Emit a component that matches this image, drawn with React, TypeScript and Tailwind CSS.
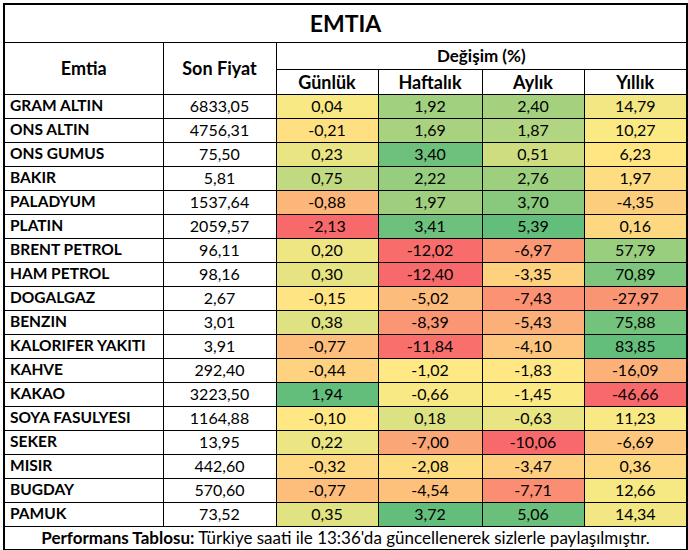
import React from "react";

type Row = [string, string, number, number, number, number];

const data: Row[] = [
  ["GRAM ALTIN", "6833,05", 0.04, 1.92, 2.4, 14.79],
  ["ONS ALTIN", "4756,31", -0.21, 1.69, 1.87, 10.27],
  ["ONS GUMUS", "75,50", 0.23, 3.4, 0.51, 6.23],
  ["BAKIR", "5,81", 0.75, 2.22, 2.76, 1.97],
  ["PALADYUM", "1537,64", -0.88, 1.97, 3.7, -4.35],
  ["PLATIN", "2059,57", -2.13, 3.41, 5.39, 0.16],
  ["BRENT PETROL", "96,11", 0.2, -12.02, -6.97, 57.79],
  ["HAM PETROL", "98,16", 0.3, -12.4, -3.35, 70.89],
  ["DOGALGAZ", "2,67", -0.15, -5.02, -7.43, -27.97],
  ["BENZIN", "3,01", 0.38, -8.39, -5.43, 75.88],
  ["KALORIFER YAKITI", "3,91", -0.77, -11.84, -4.1, 83.85],
  ["KAHVE", "292,40", -0.44, -1.02, -1.83, -16.09],
  ["KAKAO", "3223,50", 1.94, -0.66, -1.45, -46.66],
  ["SOYA FASULYESI", "1164,88", -0.1, 0.18, -0.63, 11.23],
  ["SEKER", "13,95", 0.22, -7.0, -10.06, -6.69],
  ["MISIR", "442,60", -0.32, -2.08, -3.47, 0.36],
  ["BUGDAY", "570,60", -0.77, -4.54, -7.71, 12.66],
  ["PAMUK", "73,52", 0.35, 3.72, 5.06, 14.34],
];

const RED = [0xf8, 0x69, 0x6b];
const YEL = [0xff, 0xeb, 0x84];
const GRN = [0x63, 0xbe, 0x7b];

function median(vals: number[]) {
  const s = [...vals].sort((a, b) => a - b);
  const n = s.length;
  return n % 2 ? s[(n - 1) / 2] : (s[n / 2 - 1] + s[n / 2]) / 2;
}

function mix(a: number[], b: number[], t: number) {
  return `rgb(${a.map((v, i) => Math.round(v + (b[i] - v) * t)).join(",")})`;
}

const scales = [2, 3, 4, 5].map((c) => {
  const vals = data.map((r) => r[c] as number);
  return { min: Math.min(...vals), max: Math.max(...vals), mid: median(vals) };
});

function colorFor(col: number, v: number) {
  const { min, max, mid } = scales[col];
  if (v <= mid) return mix(RED, YEL, (v - min) / (mid - min));
  return mix(YEL, GRN, (v - mid) / (max - mid));
}

const fmt = (v: number) => v.toFixed(2).replace(".", ",");

export default function App() {
  return (
    <div className="bg-white w-[688px] h-[550px] pt-[3px] pl-[3px] [font-family:Lato,'Open_Sans',sans-serif] text-black">
      <table className="border-collapse table-fixed w-[683px] border-2 border-black">
        <colgroup>
          <col className="w-[159px]" />
          <col className="w-[113px]" />
          <col className="w-[102px]" />
          <col className="w-[104px]" />
          <col className="w-[102px]" />
          <col className="w-[103px]" />
        </colgroup>
        <tbody>
          <tr className="h-[38px]">
            <td colSpan={6} className="border border-black text-center font-bold text-[23px] leading-none">
              EMTIA
            </td>
          </tr>
          <tr className="h-[27px]">
            <td rowSpan={2} className="border border-black text-center font-bold text-[18px] leading-none">
              Emtia
            </td>
            <td rowSpan={2} className="border border-black text-center font-bold text-[18px] leading-none">
              Son Fiyat
            </td>
            <td colSpan={4} className="border border-black text-center font-bold text-[17px] leading-none">
              Değişim (%)
            </td>
          </tr>
          <tr className="h-[25px]">
            {["Günlük", "Haftalık", "Aylık", "Yıllık"].map((h) => (
              <td key={h} className="border border-black text-center font-bold text-[18px] leading-none">
                {h}
              </td>
            ))}
          </tr>
          {data.map((r) => (
            <tr key={r[0]} className="h-[24px]">
              <td className="border border-black pl-[5px] font-bold text-[15.5px] leading-none whitespace-nowrap">
                {r[0]}
              </td>
              <td className="border border-black text-center text-[16px] leading-none">{r[1]}</td>
              {[2, 3, 4, 5].map((c, i) => (
                <td
                  key={c}
                  className="border border-black text-center text-[16px] leading-none"
                  style={{ backgroundColor: colorFor(i, r[c] as number) }}
                >
                  {fmt(r[c] as number)}
                </td>
              ))}
            </tr>
          ))}
          <tr className="h-[24px]">
            <td colSpan={6} className="border border-black text-center text-[17px] leading-none whitespace-nowrap">
              <span className="font-bold">Performans Tablosu:</span> Türkiye saati ile 13:36'da güncellenerek sizlerle paylaşılmıştır.
            </td>
          </tr>
        </tbody>
      </table>
    </div>
  );
}
